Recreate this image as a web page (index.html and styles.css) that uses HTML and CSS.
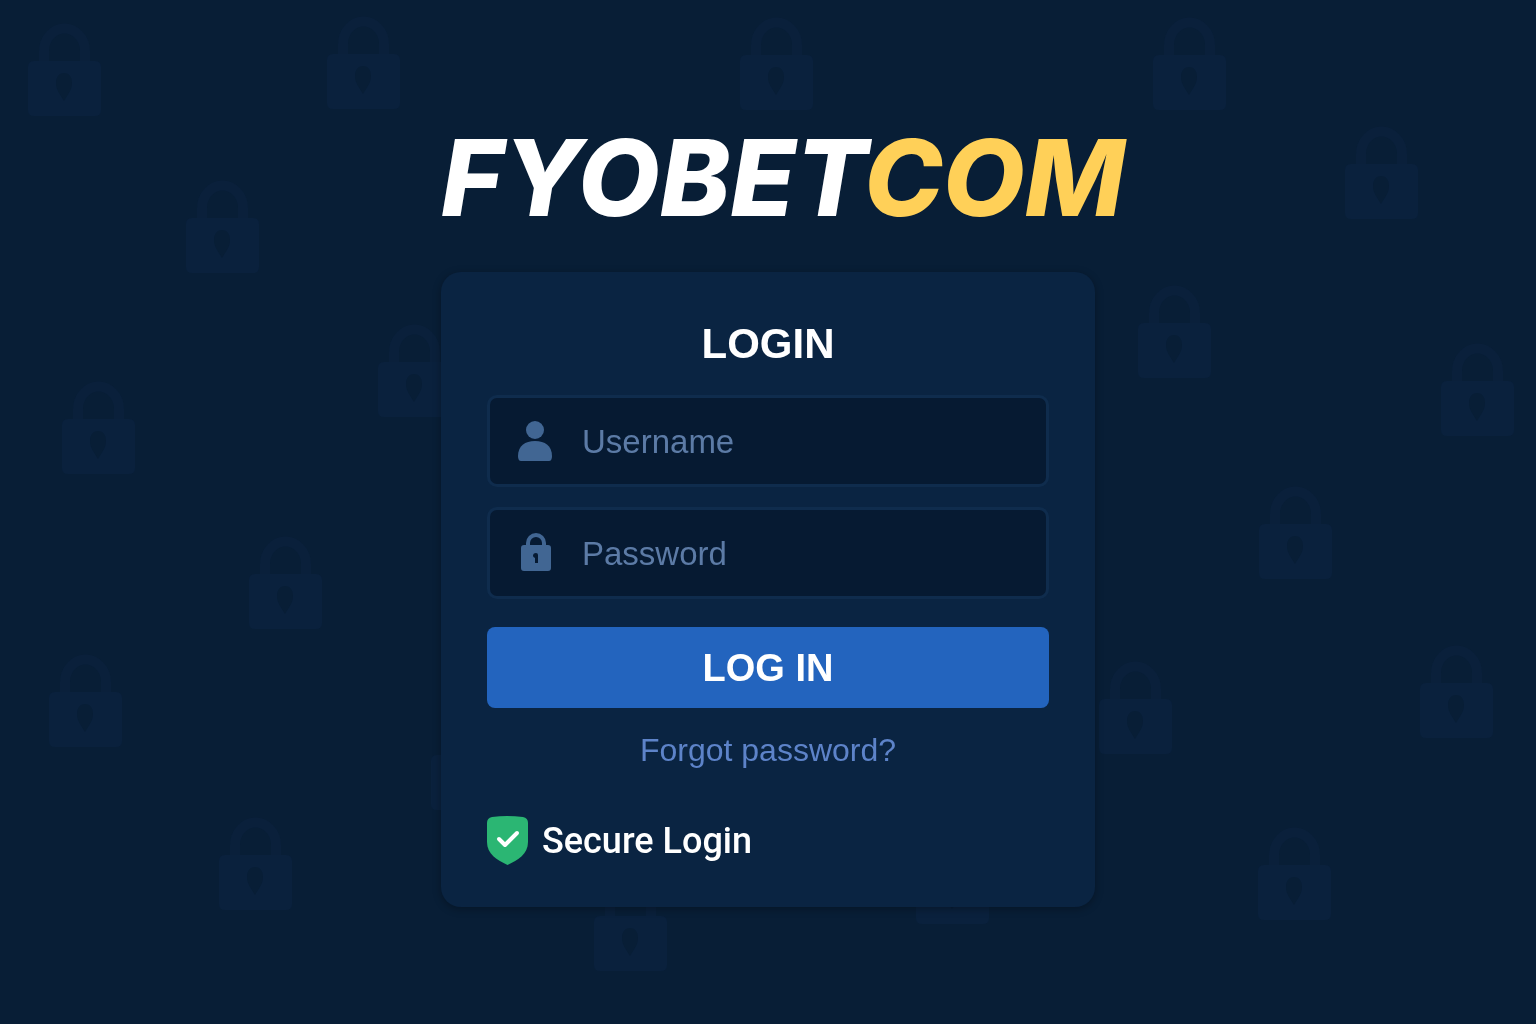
FILE: index.html
```html
<!DOCTYPE html>
<html lang="en">
<head>
    <meta charset="UTF-8">
    <meta name="viewport" content="width=device-width, initial-scale=1.0">
    <title>FYOBETCOM - Login</title>
    <link rel="stylesheet" href="styles.css">
</head>
<body>
    <!-- background lock pattern -->
    <svg class="lock-pattern" viewBox="0 0 1536 1024" preserveAspectRatio="xMidYMid slice" aria-hidden="true">
        <defs>
            <g id="bg-lock">
                <path class="shackle" d="M16 38V28a20 22 0 0 1 41 0v10" />
                <path fill-rule="evenodd" d="M6 38h61q6 0 6 6v43q0 6-6 6H6q-6 0-6-6V44q0-6 6-6zM36 50c-5 0-8 4-8 10 0 7 4 11 8 18 4-7 8-11 8-18 0-6-3-10-8-10z" />
            </g>
        </defs>
        <use href="#bg-lock" x="28" y="23" />
        <use href="#bg-lock" x="327" y="16" />
        <use href="#bg-lock" x="740" y="17" />
        <use href="#bg-lock" x="1153" y="17" />
        <use href="#bg-lock" x="1345" y="126" />
        <use href="#bg-lock" x="186" y="180" />
        <use href="#bg-lock" x="1138" y="285" />
        <use href="#bg-lock" x="378" y="324" />
        <use href="#bg-lock" x="1441" y="343" />
        <use href="#bg-lock" x="62" y="381" />
        <use href="#bg-lock" x="1259" y="486" />
        <use href="#bg-lock" x="249" y="536" />
        <use href="#bg-lock" x="1420" y="645" />
        <use href="#bg-lock" x="49" y="654" />
        <use href="#bg-lock" x="1099" y="661" />
        <use href="#bg-lock" x="431" y="717" />
        <use href="#bg-lock" x="219" y="817" />
        <use href="#bg-lock" x="1258" y="827" />
        <use href="#bg-lock" x="916" y="831" />
        <use href="#bg-lock" x="594" y="878" />
    </svg>

    <main class="login-container">
        <h1 class="logo">FYOBET<span>COM</span></h1>
        <div class="card">
            <h2>LOGIN</h2>
            <form class="login-form" action="/login" method="POST">
                <div class="field">
                    <label for="username" aria-label="Username">
                        <svg class="icon" viewBox="0 0 40 40" aria-hidden="true">
                            <circle cx="21" cy="9" r="9" />
                            <path d="M4 35c0-10 7-15 17-15s17 5 17 15q0 5-3 5H7q-3 0-3-5z" />
                        </svg>
                    </label>
                    <input type="text" id="username" name="username" placeholder="Username" required>
                </div>
                <div class="field">
                    <label for="password" aria-label="Password">
                        <svg class="icon" viewBox="0 0 40 40" aria-hidden="true">
                            <path class="icon-line" d="M14 14v-4a8 8 0 0 1 16 0v4" />
                            <path fill-rule="evenodd" d="M10 12h24q3 0 3 3v20q0 3-3 3H10q-3 0-3-3V15q0-3 3-3zM22 20q-3 0-3 3 0 1 2 2v5h3v-8q0-2-2-2z" />
                        </svg>
                    </label>
                    <input type="password" id="password" name="password" placeholder="Password" required>
                </div>
                <button type="submit">LOG IN</button>
            </form>
            <a class="forgot" href="/forgot_password">Forgot password?</a>
            <div class="secure">
                <svg class="shield" viewBox="0 0 41 49" aria-hidden="true">
                    <path d="M5 1Q20-1 36 1q5 1 5 6v19c0 12-10 18-20.500 23C10 44 0 38 0 26V7q0-5 5-6z" />
                    <path class="check" d="M12 23l6 6 12-12" />
                </svg>
                <span>Secure Login</span>
            </div>
        </div>
    </main>
</body>
</html>
```

FILE: styles.css
```css
* {
    box-sizing: border-box;
}
body {
    font-family: "Liberation Sans", Arial, sans-serif;
    background-color: #081e36;
    color: #ffffff;
    min-height: 100vh;
    margin: 0;
}
.lock-pattern {
    position: fixed;
    inset: 0;
    width: 100%;
    height: 100%;
    fill: #0a213d;
}
.lock-pattern .shackle {
    fill: none;
    stroke: #0a203b;
    stroke-width: 10;
}
.login-container {
    position: relative;
    max-width: 654px;
    margin: 0 auto;
    padding: 108px 0 48px;
}
.logo {
    font-family: Inter, sans-serif;
    font-size: 106px;
    font-weight: 800;
    font-style: italic;
    line-height: 140px;
    white-space: nowrap;
    margin: 0 0 24px;
}
.logo span {
    color: #ffd058;
}
.card {
    display: flex;
    flex-direction: column;
    padding: 46px;
    padding-bottom: 42px;
    background-color: #0a2442;
    border-radius: 20px;
    box-shadow: 0 2px 8px rgba(0, 0, 0, 0.3);
}
h2 {
    font-size: 42px;
    line-height: 52px;
    text-align: center;
    margin: 0 0 25px;
}
.login-form {
    display: flex;
    flex-direction: column;
    gap: 20px;
}
.field {
    display: flex;
    align-items: center;
    height: 92px;
    padding-left: 24px;
    background-color: #061a32;
    border: 3px solid #0f2c4d;
    border-radius: 10px;
}
.field label {
    display: flex;
}
.icon {
    width: 40px;
    height: 40px;
    fill: #416693;
}
.icon-line {
    fill: none;
    stroke: #416693;
    stroke-width: 4;
}
.field input {
    flex: 1;
    min-width: 0;
    height: 100%;
    padding: 2px 28px 0;
    font-family: inherit;
    font-size: 33px;
    color: #ffffff;
    background: none;
    border: none;
    outline: none;
}
.field input::placeholder {
    color: #5c7ba6;
    opacity: 1;
}
.login-form button {
    height: 81px;
    margin-top: 8px;
    padding-top: 2px;
    font-family: inherit;
    font-size: 38px;
    font-weight: bold;
    color: #ffffff;
    background-color: #2364be;
    border: none;
    border-radius: 8px;
    cursor: pointer;
}
.login-form button:hover {
    background-color: #2b70d0;
}
.forgot {
    align-self: center;
    margin-top: 24px;
    font-size: 32px;
    line-height: 36px;
    color: #5d83c9;
    text-decoration: none;
}
.secure {
    display: flex;
    align-items: center;
    gap: 14px;
    margin-top: 48px;
    font-family: Roboto, sans-serif;
    font-size: 36px;
    font-weight: 500;
    line-height: 48px;
}
.shield {
    width: 41px;
    height: 49px;
    fill: #2bb673;
}
.shield .check {
    fill: none;
    stroke: #ffffff;
    stroke-width: 4;
    stroke-linecap: round;
    stroke-linejoin: round;
}
```
